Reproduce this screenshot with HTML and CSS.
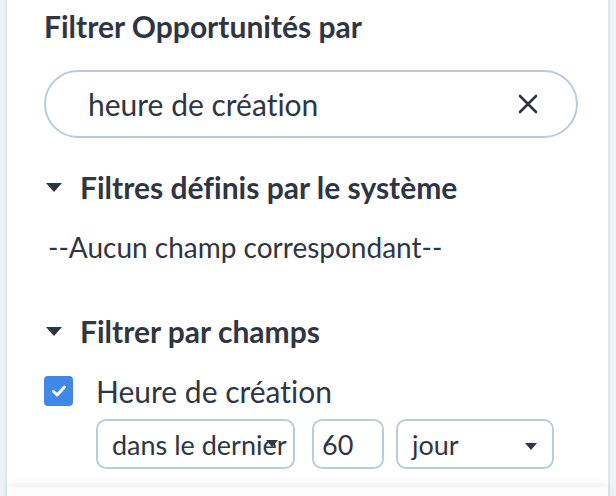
FILE: index.html
```html
<!DOCTYPE html>
<html lang="fr">
<head>
<meta charset="utf-8">
<link rel="stylesheet" href="styles.css">
</head>
<body>
<div class="panel">
  <div class="content">
    <h2 class="title">Filtrer Opportunités par</h2>
    <div class="search">
      <span class="search-text">heure de création</span>
      <svg class="clear" width="20" height="20" viewBox="0 0 20 20"><path d="M2 2 L18 18 M18 2 L2 18" stroke="#2f3542" stroke-width="2.6" stroke-linecap="round" fill="none"/></svg>
    </div>
    <div class="section-head"><span class="caret"></span><span>Filtres définis par le système</span></div>
    <div class="empty">--Aucun champ correspondant--</div>
    <div class="section-head second"><span class="caret"></span><span>Filtrer par champs</span></div>
    <div class="field">
      <span class="checkbox"><svg width="16" height="14" viewBox="0 0 16 14"><path d="M2.5 7.5 L6.2 11 L13.5 3" stroke="#fff" stroke-width="3" stroke-linecap="round" stroke-linejoin="round" fill="none"/></svg></span>
      <span class="field-label">Heure de création</span>
    </div>
    <div class="controls">
      <div class="select sel-op"><span>dans le dernier</span><span class="arrow a1"></span></div>
      <div class="select num"><span>60</span></div>
      <div class="select sel-unit"><span>jour</span><span class="arrow"></span></div>
    </div>
  </div>
  <div class="footer"></div>
</div>
</body>
</html>
```

FILE: styles.css
```css
* { box-sizing: border-box; }
html, body { margin: 0; padding: 0; }
body {
  background: #eef2f7;
  font-family: Lato, "Noto Sans", sans-serif;
  font-variant-ligatures: none;
  color: #2f3542;
  height: 496px;
  overflow: hidden;
}
.panel {
  margin-left: 5px;
  width: 605px;
  min-height: 600px;
  background: #fff;
  border-left: 2px solid #dde5ef;
  border-right: 2px solid #dde5ef;
}
.content {
  padding: 8px 30px 0 37px;
  display: flex;
  flex-direction: column;
}
.title {
  margin: 0;
  font-size: 30px;
  font-weight: 700;
  line-height: 36px;
}
.search {
  margin-top: 26px;
  height: 68px;
  border: 2px solid #bccadb;
  border-radius: 34px;
  display: flex;
  align-items: center;
  padding: 0 38px 0 42px;
}
.search-text {
  flex: 1;
  font-size: 30px;
}
.clear { display: block; }
.section-head {
  display: flex;
  align-items: center;
  margin-top: 32px;
  font-size: 30px;
  font-weight: 700;
  line-height: 34px;
}
.section-head.second { margin-top: 50px; }
.caret {
  width: 0; height: 0;
  border-left: 8px solid transparent;
  border-right: 8px solid transparent;
  border-top: 9px solid #2f3542;
  margin: 0 18px 0 2px;
}
.empty {
  margin-top: 26px;
  padding-left: 4px;
  font-size: 28px;
  line-height: 34px;
}
.field {
  display: flex;
  align-items: center;
  margin-top: 26px;
}
.checkbox {
  width: 29px; height: 30px;
  border-radius: 4px;
  background: #3f88e6;
  display: flex;
  align-items: center;
  justify-content: center;
  margin-right: 23px;
}
.field-label { font-size: 30px; line-height: 34px; }
.controls {
  display: flex;
  gap: 16px;
  margin-top: 11px;
  padding-left: 52px;
}
.select {
  position: relative;
  height: 50px;
  border: 2px solid #bccadb;
  border-radius: 10px;
  display: flex;
  align-items: center;
  font-size: 27px;
  padding-left: 14px;
}
.sel-op { width: 199px; }
.num { width: 72px; padding-left: 8px; margin-left: 1px; margin-right: -4px; }
.sel-unit { width: 158px; }
.arrow {
  position: absolute;
  width: 0; height: 0;
  border-left: 6px solid transparent;
  border-right: 6px solid transparent;
  border-top: 7px solid #2f3542;
  right: 15px;
  top: 22px;
}
.arrow.a1 { right: 15px; top: 19px; }
.footer {
  margin-top: 18px;
  height: 120px;
  background: #fcfcfc;
  box-shadow: 0 -4px 8px rgba(0,0,0,0.05);
}
```
